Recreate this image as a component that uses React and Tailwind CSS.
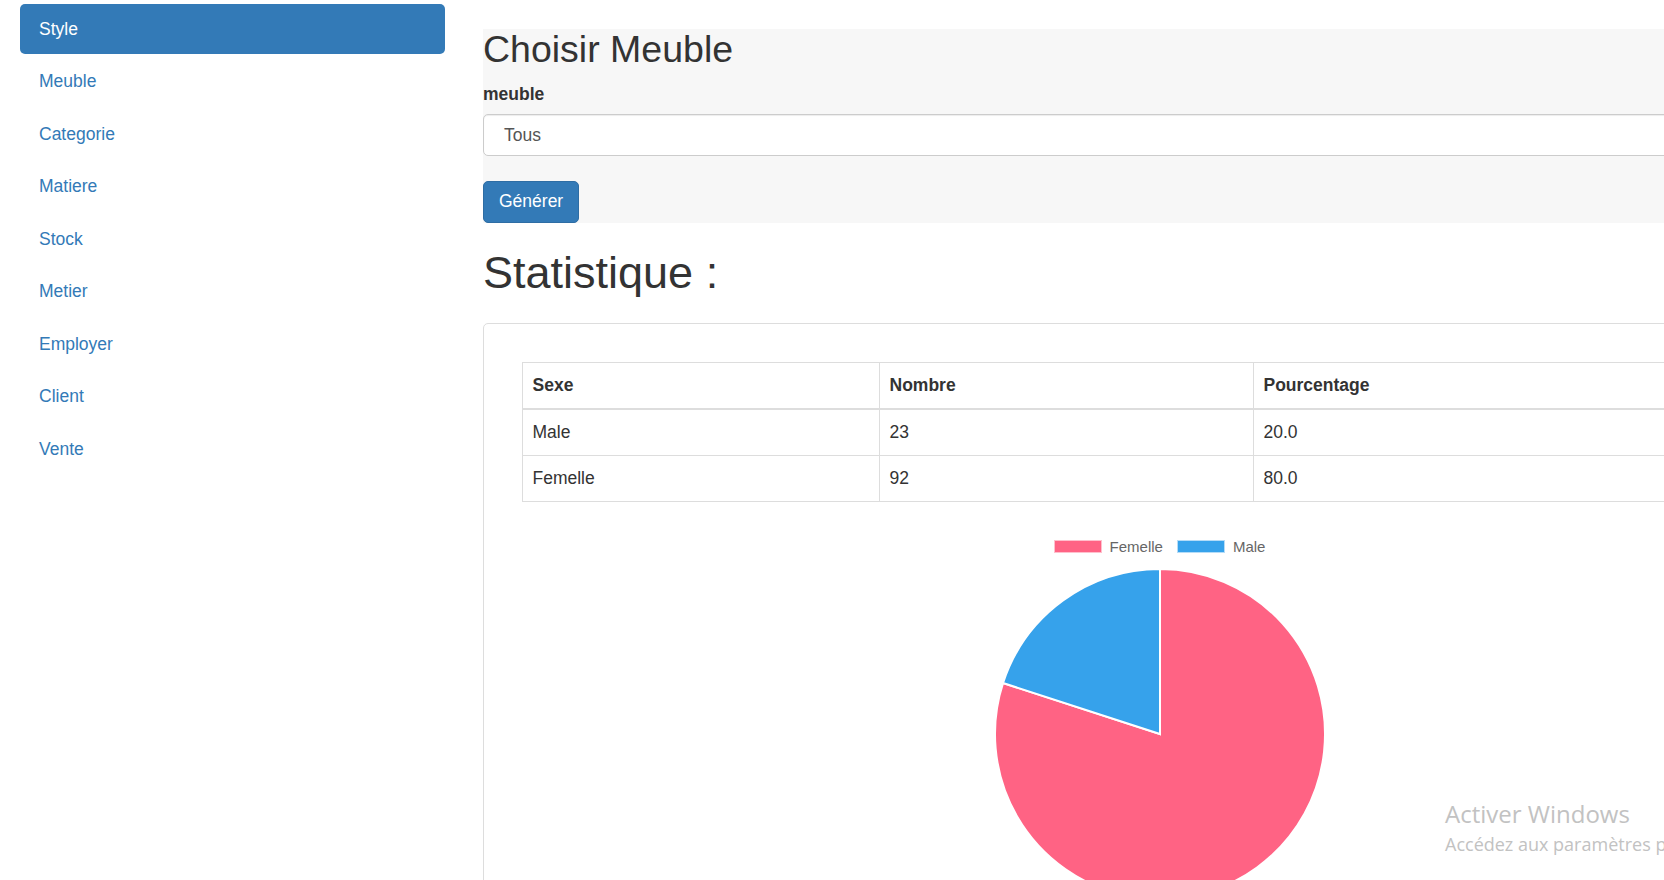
import React from "react";

const navItems = ["Style", "Meuble", "Categorie", "Matiere", "Stock", "Metier", "Employer", "Client", "Vente"];

function Pie() {
  const c = 167;
  const r = 165;
  const a = (198 * Math.PI) / 180;
  const x = c + r * Math.cos(a);
  const y = c + r * Math.sin(a);
  return (
    <svg width="334" height="334" viewBox="0 0 334 334" className="block mx-auto">
      <path d={`M${c},${c} L${c},${c - r} A${r},${r} 0 1 1 ${x},${y} Z`} fill="#ff6384" stroke="#ffffff" strokeWidth="2" />
      <path d={`M${c},${c} L${x},${y} A${r},${r} 0 0 1 ${c},${c - r} Z`} fill="#36a2eb" stroke="#ffffff" strokeWidth="2" />
    </svg>
  );
}

export default function App() {
  return (
    <div
      className="relative w-[1664px] h-[880px] overflow-hidden bg-white text-[#333333] text-[17.5px] leading-[25px]"
      style={{ fontFamily: '"Liberation Sans", Arial, Helvetica, sans-serif' }}
    >
      <div className="flex">
        {/* Sidebar */}
        <div className="w-[445px] shrink-0 pl-[20px] pt-[4px]">
          <ul className="flex flex-col gap-[2.5px]">
            {navItems.map((item, i) => (
              <li key={item}>
                <a
                  className={
                    "block h-[50px] px-[19px] py-[12.5px] rounded-[5px] " +
                    (i === 0 ? "bg-[#337ab7] text-white" : "text-[#337ab7]")
                  }
                >
                  {item}
                </a>
              </li>
            ))}
          </ul>
        </div>

        {/* Main */}
        <div className="w-[1353px] shrink-0 ml-[38px]">
          <div className="mt-[29px] bg-[#f7f7f7]">
            <h2 className="text-[37.5px] leading-[41px] font-normal">Choisir Meuble</h2>
            <label className="block mt-[12px] font-bold">meuble</label>
            <div className="mt-[7px] h-[42px] border border-[#cccccc] rounded-[5px] bg-white px-[20px] py-[7.5px] text-[#555555] shadow-[inset_0_1px_1px_rgba(0,0,0,0.075)]">
              Tous
            </div>
            <button className="mt-[25px] h-[41.5px] px-[15px] bg-[#337ab7] border border-[#2e6da4] rounded-[5px] text-white">
              Générer
            </button>
          </div>

          <h1 className="mt-[25px] text-[45px] leading-[49.5px] font-normal">Statistique :</h1>

          <div className="mt-[26px] border border-[#dddddd] rounded-[5px] px-[37.5px] pt-[37.5px] pb-[40px]">
            <table className="w-[1276px] border-collapse border border-[#dddddd] table-fixed">
              <colgroup>
                <col className="w-[357px]" />
                <col className="w-[374px]" />
                <col />
              </colgroup>
              <thead>
                <tr>
                  <th className="text-left font-bold px-[10px] py-[10px] border border-[#dddddd] border-b-[2.5px]">Sexe</th>
                  <th className="text-left font-bold px-[10px] py-[10px] border border-[#dddddd] border-b-[2.5px]">Nombre</th>
                  <th className="text-left font-bold px-[10px] py-[10px] border border-[#dddddd] border-b-[2.5px]">Pourcentage</th>
                </tr>
              </thead>
              <tbody>
                <tr>
                  <td className="px-[10px] py-[10px] border border-[#dddddd]">Male</td>
                  <td className="px-[10px] py-[10px] border border-[#dddddd]">23</td>
                  <td className="px-[10px] py-[10px] border border-[#dddddd]">20.0</td>
                </tr>
                <tr>
                  <td className="px-[10px] py-[10px] border border-[#dddddd]">Femelle</td>
                  <td className="px-[10px] py-[10px] border border-[#dddddd]">92</td>
                  <td className="px-[10px] py-[10px] border border-[#dddddd]">80.0</td>
                </tr>
              </tbody>
            </table>

            <div className="mt-[37px] flex items-center justify-center text-[15px] leading-[15px] text-[#666666]">
              <span className="inline-block w-[48px] h-[13px] bg-[#ff6384] border border-[#ffc0cd]" />
              <span className="ml-[8px]">Femelle</span>
              <span className="ml-[14px] inline-block w-[48px] h-[13px] bg-[#36a2eb] border border-[#b5dcf7]" />
              <span className="ml-[8px]">Male</span>
            </div>

            <div className="mt-[13px]">
              <Pie />
            </div>
          </div>
        </div>
      </div>

      {/* Windows activation watermark overlay */}
      <div
        className="absolute left-[1445px] top-[798px] whitespace-nowrap text-[#c2c2c2]"
        style={{ fontFamily: '"Open Sans", "Noto Sans", sans-serif' }}
      >
        <div className="text-[24px] leading-[32px]">Activer Windows</div>
        <div className="mt-[2px] text-[18px] leading-[24px]">Accédez aux paramètres pour activer Windows.</div>
      </div>
    </div>
  );
}
